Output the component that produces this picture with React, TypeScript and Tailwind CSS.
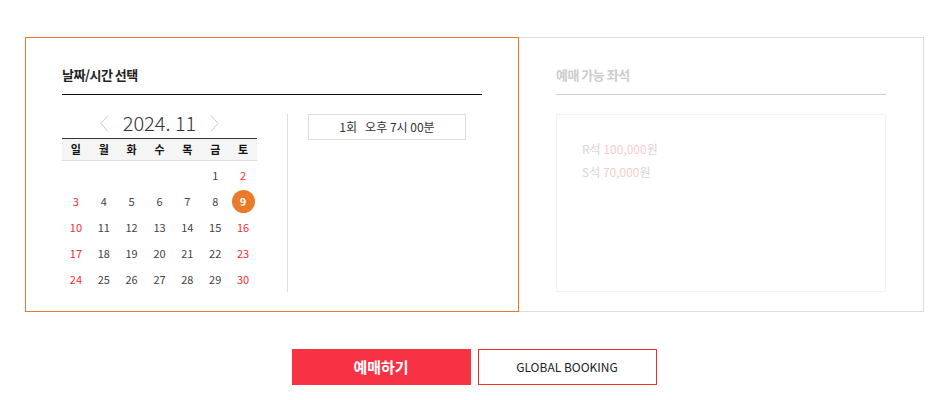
import React from "react";

const FONT = { fontFamily: '"Noto Sans CJK KR", "Noto Sans", sans-serif' };

const weeks: (number | null)[][] = [
  [null, null, null, null, null, 1, 2],
  [3, 4, 5, 6, 7, 8, 9],
  [10, 11, 12, 13, 14, 15, 16],
  [17, 18, 19, 20, 21, 22, 23],
  [24, 25, 26, 27, 28, 29, 30],
];

const dayNames = ["일", "월", "화", "수", "목", "금", "토"];

function Chevron({ dir }: { dir: "l" | "r" }) {
  return (
    <svg width="9" height="17" viewBox="0 0 9 17" fill="none">
      {dir === "l" ? (
        <polyline points="8,0.5 1,8.5 8,16.5" stroke="#cccccc" strokeWidth="1" />
      ) : (
        <polyline points="1,0.5 8,8.5 1,16.5" stroke="#cccccc" strokeWidth="1" />
      )}
    </svg>
  );
}

export default function App() {
  return (
    <div className="w-[950px] h-[400px] bg-white pt-[37px]" style={FONT}>
      <div className="flex ml-[25px]">
        {/* Left panel */}
        <div className="w-[494px] h-[275px] border border-[#e8792a] px-[36px]">
          <div className="pt-[27px] pb-[9px] border-b border-[#111]">
            <h2 className="text-[13px] leading-[20px] font-bold text-[#222] tracking-[-0.5px]">날짜/시간 선택</h2>
          </div>
          <div className="flex mt-[19px]">
            <div className="w-[195px]">
              <div className="h-[24px] flex items-start justify-center">
                <span className="mt-[1px]">
                  <Chevron dir="l" />
                </span>
                <span className="text-[20px] leading-[16px] font-light text-[#333] mx-[14px] pt-[1px]">2024. 11</span>
                <span className="mt-[1px]">
                  <Chevron dir="r" />
                </span>
              </div>
              <div className="grid grid-cols-7 h-[23px] border-t border-[#333] border-b border-b-[#dddddd] bg-[#f5f5f5]">
                {dayNames.map((d) => (
                  <div key={d} className="flex items-center justify-center text-[11px] font-bold text-[#111]">
                    {d}
                  </div>
                ))}
              </div>
              <div className="pt-[1px]">
                {weeks.map((w, i) => (
                  <div key={i} className="grid grid-cols-7 h-[26px]">
                    {w.map((d, j) => {
                      const red = j === 0 || j === 6;
                      if (d === 9) {
                        return (
                          <div key={j} className="flex items-center justify-center">
                            <span className="w-[23px] h-[23px] rounded-full bg-[#ea7b2a] text-white text-[11px] font-bold flex items-center justify-center">
                              9
                            </span>
                          </div>
                        );
                      }
                      return (
                        <div
                          key={j}
                          className={
                            "flex items-center justify-center text-[11px] " +
                            (red ? "text-[#f0302f]" : "text-[#444]")
                          }
                        >
                          {d ?? ""}
                        </div>
                      );
                    })}
                  </div>
                ))}
              </div>
            </div>
            <div className="w-px h-[178px] bg-[#dddddd] ml-[30px]" />
            <div className="ml-[20px]">
              <div className="w-[158px] h-[26px] border border-[#dddddd] flex items-center justify-center text-[12px] text-[#333]">
                1회&nbsp;&nbsp;&nbsp;오후 7시 00분
              </div>
            </div>
          </div>
        </div>
        {/* Right panel */}
        <div className="w-[405px] h-[275px] border border-l-0 border-[#dddddd] pl-[37px] pr-[37px]">
          <div className="pt-[27px] pb-[9px] border-b border-[#cccccc]">
            <h2 className="text-[13px] leading-[20px] font-bold text-[#cccccc] tracking-[-0.5px]">예매 가능 좌석</h2>
          </div>
          <div className="mt-[19px] h-[178px] border border-[#f3f3f3] pl-[25px] pt-[22px]">
            <p className="text-[12px] leading-[23px] text-[#d6d6d6]">
              R석 <span className="text-[#f9cccc]">100,000</span>원
            </p>
            <p className="text-[12px] leading-[23px] text-[#d6d6d6]">
              S석 <span className="text-[#f9cccc]">70,000</span>원
            </p>
          </div>
        </div>
      </div>
      <div className="flex justify-center gap-[7px] mt-[37px] pr-[2px]">
        <button className="w-[179px] h-[36px] bg-[#f73245] text-white text-[15px] font-bold">예매하기</button>
        <button className="w-[179px] h-[36px] border border-[#f0302f] bg-white text-[12px] text-[#222]">
          GLOBAL BOOKING
        </button>
      </div>
    </div>
  );
}
